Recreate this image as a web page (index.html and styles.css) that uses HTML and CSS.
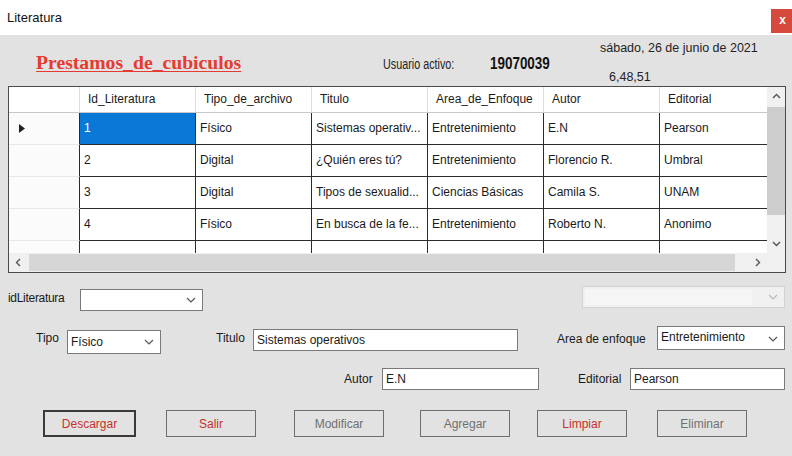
FILE: index.html
```html
<!DOCTYPE html>
<html lang="es">
<head>
<meta charset="utf-8">
<title>Literatura</title>
<link rel="stylesheet" href="styles.css">
</head>
<body>
<div class="window">
  <header class="titlebar">
    <span class="title">Literatura</span>
    <span class="close">x</span>
  </header>
  <main class="client">
    <section class="banner">
      <h1 class="brand">Prestamos_de_cubiculos</h1>
      <div class="user">
        <span class="user-label">Usuario activo:</span>
        <span class="user-id">19070039</span>
      </div>
      <div class="clock">
        <div class="date">sábado, 26 de junio de 2021</div>
        <div class="time">6,48,51</div>
      </div>
    </section>

    <section class="dgv">
      <div class="dgv-view">
        <div class="dgv-grid">
          <div class="hc hc-corner"></div>
          <div class="hc">Id_Literatura</div>
          <div class="hc">Tipo_de_archivo</div>
          <div class="hc">Titulo</div>
          <div class="hc">Area_de_Enfoque</div>
          <div class="hc">Autor</div>
          <div class="hc">Editorial</div>

          <div class="rh"><svg class="cur" width="6" height="9" viewBox="0 0 6 9"><path d="M0 0 L6 4.5 L0 9 Z" fill="#222"/></svg></div>
          <div class="c c-sel">1</div>
          <div class="c">Físico</div>
          <div class="c">Sistemas operativ...</div>
          <div class="c">Entretenimiento</div>
          <div class="c">E.N</div>
          <div class="c">Pearson</div>

          <div class="rh"></div>
          <div class="c">2</div>
          <div class="c">Digital</div>
          <div class="c">¿Quién eres tú?</div>
          <div class="c">Entretenimiento</div>
          <div class="c">Florencio R.</div>
          <div class="c">Umbral</div>

          <div class="rh"></div>
          <div class="c">3</div>
          <div class="c">Digital</div>
          <div class="c">Tipos de sexualid...</div>
          <div class="c">Ciencias Básicas</div>
          <div class="c">Camila S.</div>
          <div class="c">UNAM</div>

          <div class="rh"></div>
          <div class="c">4</div>
          <div class="c">Físico</div>
          <div class="c">En busca de la fe...</div>
          <div class="c">Entretenimiento</div>
          <div class="c">Roberto N.</div>
          <div class="c">Anonimo</div>

          <div class="rh"></div>
          <div class="c"></div>
          <div class="c"></div>
          <div class="c"></div>
          <div class="c"></div>
          <div class="c"></div>
          <div class="c"></div>
        </div>
      </div>
      <div class="vscroll">
        <span class="sb-btn"><svg width="9" height="6" viewBox="0 0 9 6"><path d="M1 5 L4.5 1.5 L8 5" fill="none" stroke="#555" stroke-width="1.4"/></svg></span>
        <span class="vthumb"></span>
        <span class="sb-fill"></span>
        <span class="sb-btn"><svg width="9" height="6" viewBox="0 0 9 6"><path d="M1 1 L4.5 4.5 L8 1" fill="none" stroke="#555" stroke-width="1.4"/></svg></span>
      </div>
      <div class="hscroll">
        <span class="sb-btn h"><svg width="6" height="9" viewBox="0 0 6 9"><path d="M5 1 L1.5 4.5 L5 8" fill="none" stroke="#555" stroke-width="1.4"/></svg></span>
        <span class="hthumb"></span>
        <span class="sb-fill"></span>
        <span class="sb-btn h"><svg width="6" height="9" viewBox="0 0 6 9"><path d="M1 1 L4.5 4.5 L1 8" fill="none" stroke="#555" stroke-width="1.4"/></svg></span>
      </div>
      <div class="sb-corner"></div>
    </section>

    <section class="row row-a">
      <label class="lbl lbl-id">idLiteratura</label>
      <div class="combo combo-id"><span class="combo-text"></span><svg class="chev" width="10" height="6" viewBox="0 0 10 6"><path d="M1 1 L5 5 L9 1" fill="none" stroke="#555" stroke-width="1.2"/></svg></div>
      <div class="combo combo-off"><span class="combo-inner"></span><svg class="chev" width="10" height="6" viewBox="0 0 10 6"><path d="M1 1 L5 5 L9 1" fill="none" stroke="#b8b8b8" stroke-width="1.2"/></svg></div>
    </section>

    <section class="row row-b">
      <label class="lbl lbl-tipo">Tipo</label>
      <div class="combo combo-tipo"><span class="combo-text">Físico</span><svg class="chev" width="10" height="6" viewBox="0 0 10 6"><path d="M1 1 L5 5 L9 1" fill="none" stroke="#555" stroke-width="1.2"/></svg></div>
      <label class="lbl lbl-titulo">Titulo</label>
      <div class="field field-titulo">Sistemas operativos</div>
      <label class="lbl lbl-area">Area de enfoque</label>
      <div class="combo combo-area"><span class="combo-text">Entretenimiento</span><svg class="chev" width="10" height="6" viewBox="0 0 10 6"><path d="M1 1 L5 5 L9 1" fill="none" stroke="#555" stroke-width="1.2"/></svg></div>
    </section>

    <section class="row row-c">
      <label class="lbl lbl-autor">Autor</label>
      <div class="field field-autor">E.N</div>
      <label class="lbl lbl-edit">Editorial</label>
      <div class="field field-edit">Pearson</div>
    </section>

    <section class="actions">
      <button class="btn btn-default btn-red">Descargar</button>
      <button class="btn btn-red">Salir</button>
      <button class="btn btn-gray">Modificar</button>
      <button class="btn btn-gray">Agregar</button>
      <button class="btn btn-red">Limpiar</button>
      <button class="btn btn-gray">Eliminar</button>
    </section>
  </main>
</div>
</body>
</html>
```

FILE: styles.css
```css
* { box-sizing: border-box; }

html, body {
  margin: 0;
  padding: 0;
}

body {
  width: 792px;
  height: 456px;
  overflow: hidden;
  font-family: "Liberation Sans", Arial, sans-serif;
  font-size: 12px;
  color: #1a1a1a;
  background: #e2e2e2;
}

.window {
  width: 792px;
  height: 456px;
  display: flex;
  flex-direction: column;
}

/* ---------- title bar ---------- */
.titlebar {
  height: 35px;
  background: #ffffff;
  display: flex;
  align-items: flex-start;
}

.title {
  margin: 10px 0 0 7px;
  font-size: 13px;
  line-height: 16px;
  color: #111;
}

.close {
  margin: 9px 0 0 auto;
  width: 21px;
  height: 24px;
  background: #d64a3e;
  color: #fff;
  font-size: 12px;
  font-weight: bold;
  line-height: 23px;
  text-align: center;
  padding-left: 2px;
}

/* ---------- client area ---------- */
.client {
  flex: 1;
  background: #e2e2e2;
  display: flex;
  flex-direction: column;
}

.banner {
  height: 51px;
  display: grid;
  grid-template-columns: 36px 347px 217px 1fr;
  align-items: start;
}

.brand {
  grid-column: 2;
  margin: 16px 0 0 0;
  font-family: "Liberation Serif", "Times New Roman", serif;
  font-weight: bold;
  font-size: 19.7px;
  line-height: 22px;
  color: #e53b30;
  text-decoration: underline;
  text-decoration-thickness: 1px;
  text-underline-offset: 2px;
  white-space: nowrap;
}

.user {
  grid-column: 3;
  display: grid;
  grid-template-columns: 107px 1fr;
  align-items: baseline;
  margin-top: 19px;
  white-space: nowrap;
}

.user-label {
  display: inline-block;
  font-family: "Liberation Sans", Arial, sans-serif;
  font-size: 14px;
  line-height: 18px;
  color: #222;
  transform: scaleX(0.77);
  transform-origin: left center;
}

.user-id {
  display: inline-block;
  font-family: "Liberation Sans", Arial, sans-serif;
  font-weight: bold;
  font-size: 16.4px;
  line-height: 18px;
  color: #111;
  transform: scaleX(0.82);
  transform-origin: left center;
}

.clock {
  grid-column: 4;
  white-space: nowrap;
  font-size: 12.5px;
  color: #222;
}

.date {
  margin-top: 5px;
  line-height: 16px;
}

.time {
  margin: 13px 0 0 9px;
  line-height: 16px;
}

/* ---------- data grid ---------- */
.dgv {
  margin-left: 8px;
  width: 778px;
  height: 187px;
  border: 1px solid #4a4a4a;
  background: #f0f0f0;
  display: grid;
  grid-template-columns: 1fr 18px;
  grid-template-rows: 166px 19px;
}

.dgv-view {
  overflow: hidden;
  background: #f0f0f0;
}

.dgv-grid {
  display: grid;
  grid-template-columns: 71px repeat(6, 116px);
  grid-template-rows: 26px repeat(5, 32px);
  width: 767px;
}

.hc {
  background: #ffffff;
  border-right: 1px solid #dedede;
  border-bottom: 1px solid #c8c8c8;
  padding-left: 8px;
  line-height: 25px;
  white-space: nowrap;
  overflow: hidden;
  color: #1a1a1a;
}

.hc-corner { padding: 0; }

.rh {
  background: #fbfbfb;
  border-right: 1px solid #2a2a2a;
  border-bottom: 1px solid #e8e8e8;
  display: flex;
  align-items: center;
  padding-left: 10px;
}

.c {
  background: #ffffff;
  border-right: 1px solid #2a2a2a;
  border-bottom: 1px solid #2a2a2a;
  padding-left: 4px;
  line-height: 31px;
  white-space: nowrap;
  overflow: hidden;
  color: #1a1a1a;
}

.c-sel {
  background: #0a78d7;
  color: #ffffff;
}

/* ---------- scrollbars ---------- */
.vscroll {
  background: #f0f0f0;
  display: flex;
  flex-direction: column;
}

.sb-btn {
  height: 18px;
  flex: none;
  display: flex;
  align-items: center;
  justify-content: center;
}

.sb-btn.h {
  width: 18px;
  height: 100%;
}

.vthumb {
  margin-top: 2px;
  height: 108px;
  background: #cdcdcd;
  flex: none;
}

.sb-fill { flex: 1; }

.hscroll {
  background: #f0f0f0;
  display: flex;
  align-items: stretch;
  padding: 1px 0;
}

.hthumb {
  margin-left: 2px;
  width: 706px;
  background: #d6d6d6;
  flex: none;
}

.sb-corner {
  background: #f0f0f0;
}

/* ---------- form rows ---------- */
.row {
  display: grid;
  align-items: start;
}

.lbl {
  line-height: 16px;
  white-space: nowrap;
  color: #1a1a1a;
}

.combo, .field {
  background: #ffffff;
  border: 1px solid #7a7a7a;
  height: 22px;
  display: flex;
  align-items: center;
  white-space: nowrap;
  overflow: hidden;
}

.field { padding-left: 3px; }

.combo-text {
  flex: 1;
  padding-left: 3px;
}

.chev {
  flex: none;
  margin-right: 6px;
}

.row-a {
  margin-top: 13px;
  height: 25px;
  grid-template-columns: 8px 72px 123px 1fr 203px 7px;
}

.lbl-id { grid-column: 2; margin-top: 4px; letter-spacing: -0.3px; }
.combo-id { grid-column: 3; margin-top: 3px; }
.combo-id .chev { margin-right: 6px; }

.combo-off {
  grid-column: 5;
  background: #f0f0f0;
  border-color: #d2d2d2;
  padding: 2px;
}

.combo-inner {
  flex: 1;
  align-self: stretch;
  background: #f5f5f5;
  margin-right: 16px;
}

.combo-off .chev { margin-right: 4px; }

.row-b {
  margin-top: 15px;
  height: 28px;
  grid-template-columns: 36px 31px 94px 55px 37px 265px 39px 100px 128px;
}

.lbl-tipo { grid-column: 2; margin-top: 4px; }
.combo-tipo { grid-column: 3; margin-top: 4px; height: 24px; }
.lbl-titulo { grid-column: 5; margin-top: 4px; }
.field-titulo { grid-column: 6; margin-top: 3px; }
.lbl-area { grid-column: 8; margin-top: 5px; }
.combo-area { grid-column: 9; height: 24px; align-items: flex-start; }
.combo-area .combo-text { padding-top: 3px; }
.combo-area .chev { margin-top: 9px; }

.row-c {
  margin-top: 14px;
  height: 22px;
  grid-template-columns: 344px 38px 157px 39px 52px 155px;
}

.lbl-autor { grid-column: 2; margin-top: 3px; }
.field-autor { grid-column: 3; }
.lbl-edit { grid-column: 5; margin-top: 3px; }
.field-edit { grid-column: 6; }

/* ---------- buttons ---------- */
.actions {
  margin-top: 20px;
  display: flex;
  align-items: flex-start;
  padding-left: 43px;
}

.btn {
  height: 27px;
  width: 90px;
  background: #e2e2e2;
  border: 1px solid #6e6e6e;
  font-family: "Liberation Sans", Arial, sans-serif;
  font-size: 12px;
  padding: 0;
  margin: 0;
}

.btn-default {
  width: 93px;
  border: 2px solid #3a3a3a;
}

.btn-red { color: #c8312b; }
.btn-gray { color: #707070; }

.actions .btn:nth-child(2) { margin-left: 30px; }
.actions .btn:nth-child(3) { margin-left: 38px; }
.actions .btn:nth-child(4) { margin-left: 36px; }
.actions .btn:nth-child(5) { margin-left: 27px; }
.actions .btn:nth-child(6) { margin-left: 30px; }
```
